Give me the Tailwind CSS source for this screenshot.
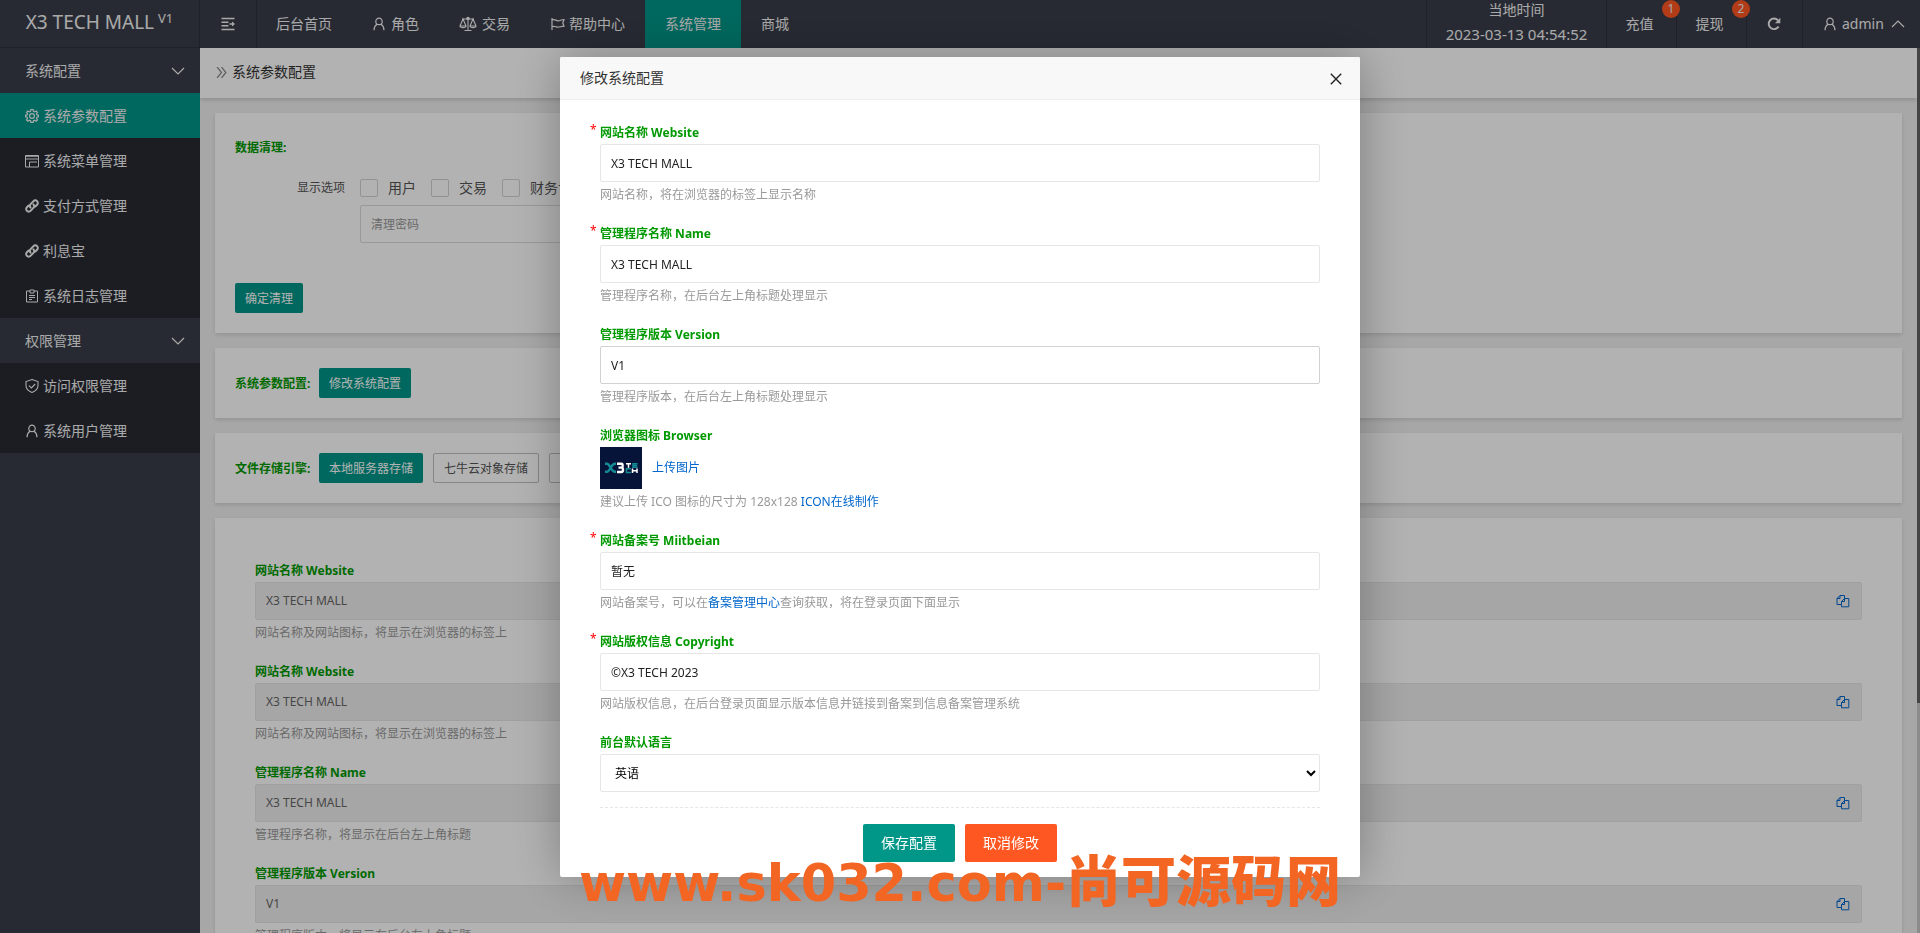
<!DOCTYPE html>
<html lang="zh-CN">
<head>
<meta charset="utf-8">
<title>X3 TECH MALL</title>
<script src="https://cdn.jsdelivr.net/npm/@tailwindcss/browser@4"></script>
</head>
<body class="h-screen overflow-hidden bg-[#f0f0f0] font-['Noto_Sans','Noto_Sans_CJK_SC',sans-serif] text-xs text-[#333]">
<svg class="hidden" aria-hidden="true">
  <symbol id="user" viewBox="0 0 14 14"><path d="M7 7.6A3.2 3.2 0 1 0 7 1.200a3.200 3.200 0 0 0 0 6.400zM5 7.200C3 8.400 2.100 10.500 2 13.200M9 7.200c2 1.200 2.900 3.300 3 6" fill="none" stroke="currentColor" stroke-width="1.200"/></symbol>
  <symbol id="link" viewBox="0 0 14 14"><g fill="none" stroke="currentColor" stroke-width="2" stroke-linecap="round"><path d="M5.600 8.600c-1.100-1.200-1-2.500 0-3.500l2.900-3c1-1 2.600-1 3.600 0s1 2.600 0 3.600L10.300 7.500"/><path d="M8.400 5.400c1.100 1.200 1 2.500 0 3.500l-2.900 3c-1 1-2.600 1-3.600 0s-1-2.600 0-3.600L3.700 6.500"/></g></symbol>
  <symbol id="down" viewBox="0 0 14 14"><path d="M1 4l6 6 6-6" fill="none" stroke="currentColor" stroke-width="1.200"/></symbol>
  <symbol id="copy" viewBox="0 0 14 14"><path d="M5.500 10.500h-4.500V4.500L4 1.500h4.500v3M1 4.500h3v-3M5.500 12.800V7.500L8.500 4.500h4.300v8.300zM5.500 7.500h3v-3" fill="none" stroke="currentColor" stroke-width="1"/></symbol>
</svg>
<div class="flex h-full flex-col">
  <header class="flex h-12 shrink-0 bg-[#393d49] text-sm text-[#f3f3f3]">
    <div class="flex w-50 shrink-0 justify-center gap-1 border-r border-b border-black/20 text-[19px] leading-11"><span>X3 TECH MALL</span><sup class="top-0 text-[13px] leading-9">V1</sup></div>
    <nav class="flex flex-1 items-stretch" aria-label="主导航">
      <button class="flex w-[57px] items-center justify-center border-r border-black/20" aria-label="收起菜单"><svg class="size-4" viewBox="0 0 16 16" fill="none" stroke="currentColor" stroke-width="1.500"><path d="M1.500 2.500h13M1.500 6.200h7M1.500 9.800h7M1.500 13.500h13M9.500 8H13"/><path d="M12 5.500L15 8l-3 2.500z" fill="currentColor" stroke="none"/></svg></button>
      <a href="#" class="flex items-center pr-5 pl-[19px]">后台首页</a>
      <a href="#" class="flex items-center gap-[5px] px-5"><svg class="size-3.5"><use href="#user"/></svg>角色</a>
      <a href="#" class="flex items-center gap-[5px] px-5"><svg class="h-4 w-[18px]" viewBox="0 0 18 16" fill="none" stroke="currentColor" stroke-width="1.100"><path d="M9 1v13M5.500 14.500h7M3 3h12M4 3L1 10h6zM14 3l-3 7h6zM1 10c.3 2.200 5.700 2.200 6 0M11 10c.3 2.200 5.700 2.200 6 0"/><circle cx="9" cy="2.500" r="1.200" fill="currentColor"/></svg>交易</a>
      <a href="#" class="flex items-center gap-1 px-5"><svg class="h-4 w-[15px]" viewBox="0 0 15 16" fill="none" stroke="currentColor" stroke-width="1.200"><path d="M2 2v12M2 4c2.500-1.500 4 .8 6 .8S11.500 3.500 14 3.500L12.800 7l1.200 3.200c-2.500 0-4 1-6 1s-3.500-1.800-6-.5"/></svg>帮助中心</a>
      <a href="#" class="flex items-center bg-[#009688] px-5" aria-current="page">系统管理</a>
      <a href="#" class="flex items-center px-5">商城</a>
    </nav>
    <div class="flex items-stretch">
      <div class="flex w-[180px] flex-col items-center border-l border-black/20"><span class="h-5 leading-5">当地时间</span><time class="text-[15px] leading-7">2023-03-13 04:54:52</time></div>
      <a href="#" class="relative flex w-[70px] items-center justify-center border-l border-black/20 pr-1">充值<span class="absolute top-0 -right-1 z-10 size-[18px] rounded-full bg-[#ff5722] text-center text-xs leading-[18px]">1</span></a>
      <a href="#" class="relative flex w-[70px] items-center justify-center border-l border-black/20 pr-1">提现<span class="absolute top-0 -right-1 z-10 size-[18px] rounded-full bg-[#ff5722] text-center text-xs leading-[18px]">2</span></a>
      <button class="flex w-14 items-center justify-center border-l border-black/20 pr-0.5" aria-label="刷新"><svg class="size-3.5" viewBox="0 0 14 14"><path d="M11.600 9.500A5.300 5.300 0 1 1 11 3.300" fill="none" stroke="currentColor" stroke-width="1.900"/><path d="M13.300.8v5.400H8z" fill="currentColor"/></svg></button>
      <button class="flex w-[118px] items-center gap-[5px] border-l border-black/20 pl-5"><svg class="size-3.5"><use href="#user"/></svg>admin<svg class="ml-0.5 size-3.5 rotate-180"><use href="#down"/></svg></button>
    </div>
  </header>
  <div class="flex min-h-0 flex-1">
    <aside class="w-50 shrink-0 bg-[#393d49] text-sm text-[#f3f3f3]">
      <button class="flex h-[45px] w-full items-center justify-between pr-[15px] pl-[25px]">系统配置<svg class="size-3.5"><use href="#down"/></svg></button>
      <nav class="bg-black/30" aria-label="系统配置">
        <a href="#" class="flex h-[45px] items-center gap-1 bg-[#009688] pl-[25px]" aria-current="page"><svg class="size-3.5" viewBox="0 0 14 14" fill="none" stroke="currentColor" stroke-width="1.200"><circle cx="7" cy="7" r="2.400"/><path d="M5.900.7h2.200l.4 1.700 1.100.5 1.500-.9 1.300 1.300-.9 1.600.5 1 1.500.4v1.500l-1.500.5-.5 1.100.9 1.500-1.300 1.300-1.500-.9-1.100.5-.4 1.600H5.900l-.4-1.600-1.100-.5-1.500.9-1.300-1.300.9-1.500L2 8.300.5 7.800V6.300L2 5.900l.5-1-.9-1.600L2.900 2l1.500.9 1.100-.5z"/></svg>系统参数配置</a>
        <a href="#" class="flex h-[45px] items-center gap-1 pl-[25px]"><svg class="size-3.5" viewBox="0 0 14 14" fill="none" stroke="currentColor"><path d="M.5 1.500h13v11.500H.5zM.5 5h13M4.500 8v5M4.500 8H12"/><path d="M.5 2h13" stroke-width="1.500"/></svg>系统菜单管理</a>
        <a href="#" class="flex h-[45px] items-center gap-1 pl-[25px]"><svg class="size-3.5"><use href="#link"/></svg>支付方式管理</a>
        <a href="#" class="flex h-[45px] items-center gap-1 pl-[25px]"><svg class="size-3.5"><use href="#link"/></svg>利息宝</a>
        <a href="#" class="flex h-[45px] items-center gap-1 pl-[25px]"><svg class="size-3.5" viewBox="0 0 14 14" fill="none" stroke="currentColor"><path d="M5 2H1.500v11h11V2H9M5 1h4v3H5zM4 6.500h6M4 8.500h6M4 10.500h3"/></svg>系统日志管理</a>
      </nav>
      <button class="flex h-[45px] w-full items-center justify-between pr-[15px] pl-[25px]">权限管理<svg class="size-3.5"><use href="#down"/></svg></button>
      <nav class="bg-black/30" aria-label="权限管理">
        <a href="#" class="flex h-[45px] items-center gap-1 pl-[25px]"><svg class="size-3.5" viewBox="0 0 14 14" fill="none" stroke="currentColor" stroke-width="1.100"><path d="M7 .6l6 2v4c0 3.400-2.600 5.600-6 6.900C3.600 12.200 1 10 1 6.600v-4zM4 6.600L6.400 9 10.200 5"/></svg>访问权限管理</a>
        <a href="#" class="flex h-[45px] items-center gap-1 pl-[25px]"><svg class="size-3.5"><use href="#user"/></svg>系统用户管理</a>
      </nav>
    </aside>
    <main class="relative min-w-0 flex-1 overflow-hidden pr-[3px]">
      <div class="flex h-[50px] items-center gap-[5px] bg-white pb-0.5 pl-4 text-sm shadow-[0_2px_4px_rgba(0,0,0,0.15)]"><svg class="size-[11px] text-[#888]" viewBox="0 0 10 10"><path d="M1 0l4 5-4 5M5 0l4 5-4 5" fill="none" stroke="currentColor" stroke-width="1.100"/></svg><h1>系统参数配置</h1></div>
      <div class="flex flex-col gap-[15px] p-[15px]">
        <section class="bg-white p-5 shadow-[0_2px_4px_rgba(0,0,0,0.12)]">
          <h2 class="leading-[30px] font-bold text-[#090]">数据清理:</h2>
          <div class="flex gap-[15px] pt-[11px] pl-[62px] text-[#555]">
            <span class="leading-7">显示选项</span>
            <div>
              <div class="flex h-7 items-center gap-[15px] text-sm">
                <label class="flex items-center gap-2.5"><input type="checkbox" class="size-[18px] appearance-none rounded-xs border border-[#d2d2d2]">用户</label>
                <label class="flex items-center gap-2.5"><input type="checkbox" class="size-[18px] appearance-none rounded-xs border border-[#d2d2d2]">交易</label>
                <label class="flex items-center gap-2.5"><input type="checkbox" class="size-[18px] appearance-none rounded-xs border border-[#d2d2d2]">财务记录</label>
              </div>
              <input type="password" aria-label="清理密码" placeholder="清理密码" class="mt-[3px] block h-[38px] w-75 rounded-xs border border-[#dcdcdc] px-2.5 placeholder:text-[#999]">
            </div>
          </div>
          <button class="mt-10 block h-[30px] rounded-xs bg-[#009688] px-2.5 pt-0.5 text-white">确定清理</button>
        </section>
        <section class="flex items-center bg-white p-5 shadow-[0_2px_4px_rgba(0,0,0,0.12)]">
          <h2 class="w-21 pt-0.5 font-bold whitespace-nowrap text-[#090]">系统参数配置:</h2>
          <button class="h-[30px] rounded-xs bg-[#009688] px-2.5 pt-0.5 text-white">修改系统配置</button>
        </section>
        <section class="flex items-center bg-white p-5 shadow-[0_2px_4px_rgba(0,0,0,0.12)]">
          <h2 class="w-21 pt-0.5 font-bold whitespace-nowrap text-[#090]">文件存储引擎:</h2>
          <div class="flex gap-2.5">
            <button class="h-[30px] rounded-xs bg-[#009688] px-2.5 pt-0.5 text-white">本地服务器存储</button>
            <button class="h-[30px] rounded-xs border border-[#c0c0c0] px-2.5 pt-0.5 text-[#555]">七牛云对象存储</button>
            <button class="h-[30px] rounded-xs border border-[#c0c0c0] px-2.5 pt-0.5 text-[#555]">阿里云OSS存储</button>
          </div>
        </section>
        <section class="flex flex-col gap-[15px] bg-white p-10 shadow-[0_2px_4px_rgba(0,0,0,0.12)]">
          <div><div class="h-6 leading-[26px] font-bold text-[#090]">网站名称 Website</div><div class="flex h-[38px] items-center justify-between rounded-xs border border-[#e6e6e6] bg-[#eee] pr-[11px] pl-2.5 text-[#666]">X3 TECH MALL<button class="text-[#06c]" aria-label="复制"><svg class="size-3.5"><use href="#copy"/></svg></button></div><p class="h-6 leading-[26px] text-[#999]">网站名称及网站图标，将显示在浏览器的标签上</p></div>
          <div><div class="h-6 leading-[26px] font-bold text-[#090]">网站名称 Website</div><div class="flex h-[38px] items-center justify-between rounded-xs border border-[#e6e6e6] bg-[#eee] pr-[11px] pl-2.5 text-[#666]">X3 TECH MALL<button class="text-[#06c]" aria-label="复制"><svg class="size-3.5"><use href="#copy"/></svg></button></div><p class="h-6 leading-[26px] text-[#999]">网站名称及网站图标，将显示在浏览器的标签上</p></div>
          <div><div class="h-6 leading-[26px] font-bold text-[#090]">管理程序名称 Name</div><div class="flex h-[38px] items-center justify-between rounded-xs border border-[#e6e6e6] bg-[#eee] pr-[11px] pl-2.5 text-[#666]">X3 TECH MALL<button class="text-[#06c]" aria-label="复制"><svg class="size-3.5"><use href="#copy"/></svg></button></div><p class="h-6 leading-[26px] text-[#999]">管理程序名称，将显示在后台左上角标题</p></div>
          <div><div class="h-6 leading-[26px] font-bold text-[#090]">管理程序版本 Version</div><div class="flex h-[38px] items-center justify-between rounded-xs border border-[#e6e6e6] bg-[#eee] pr-[11px] pl-2.5 text-[#666]">V1<button class="text-[#06c]" aria-label="复制"><svg class="size-3.5"><use href="#copy"/></svg></button></div><p class="h-6 leading-[26px] text-[#999]">管理程序版本，将显示在后台左上角标题</p></div>
        </section>
      </div>
      <div class="absolute inset-y-0 right-0 w-[3px] bg-[#c8c8c8]"><div class="h-[74%] bg-[#626262]"></div></div>
    </main>
  </div>
</div>

<div class="fixed inset-0 z-20 flex items-start justify-center bg-black/30 pt-[57px]">
  <div role="dialog" aria-labelledby="dlg-title" class="w-200 rounded-xs bg-white shadow-[1px_1px_50px_rgba(0,0,0,0.3)]">
    <div class="flex h-[43px] items-center justify-between rounded-t-xs border-b border-[#eee] bg-[#f8f8f8] pr-4.5 pl-5 text-sm">
      <h2 id="dlg-title">修改系统配置</h2>
      <button class="pt-0.5" aria-label="关闭"><svg class="size-3" viewBox="0 0 12 12"><path d="M.8.8l10.400 10.400M11.200.8L.8 11.200" stroke="#222" stroke-width="1.400"/></svg></button>
    </div>
    <form class="px-10 pt-5 pb-[15px] text-[#999]">
      <div class="flex flex-col gap-[15px]">
        <div class="relative"><span class="absolute top-0.5 -left-2.5 text-[#f00]">*</span><label for="f1" class="block h-6 leading-[26px] font-bold text-[#090]">网站名称 Website</label><input id="f1" value="X3 TECH MALL" class="block h-[38px] w-full rounded-xs border border-[#e6e6e6] px-2.5 text-[#222]"><p class="h-6 leading-[26px]">网站名称，将在浏览器的标签上显示名称</p></div>
        <div class="relative"><span class="absolute top-0.5 -left-2.5 text-[#f00]">*</span><label for="f2" class="block h-6 leading-[26px] font-bold text-[#090]">管理程序名称 Name</label><input id="f2" value="X3 TECH MALL" class="block h-[38px] w-full rounded-xs border border-[#e6e6e6] px-2.5 text-[#222]"><p class="h-6 leading-[26px]">管理程序名称，在后台左上角标题处理显示</p></div>
        <div><label for="f3" class="block h-6 leading-[26px] font-bold text-[#090]">管理程序版本 Version</label><input id="f3" value="V1" class="block h-[38px] w-full rounded-xs border border-[#d2d2d2] px-2.5 text-[#222]"><p class="h-6 leading-[26px]">管理程序版本，在后台左上角标题处理显示</p></div>
        <div>
          <div class="h-6 leading-[26px] font-bold text-[#090]">浏览器图标 Browser</div>
          <div class="flex items-center gap-2.5">
            <svg class="size-[42px]" viewBox="0 0 42 42" role="img" aria-label="X3 TECH"><path d="M0 0h42v42H0z" fill="#06143a"/><g fill="none" stroke-width="2.400"><path d="M5 16.800h2c3 0 4 8 8 8h1M5 24.800h2c3 0 4-8 8-8h1" stroke="#138a94"/><path d="M17 16.800h4.500c1.500 0 1.500 3.800 0 3.800H18.500h3c2 0 2 4.400 0 4.400H17" stroke="#fff"/></g><g fill="none" stroke-width="1.500"><path d="M26 16.700h5M28.500 16.700v4M32.500 21.500v4.500M37 21.500v4.500M32.500 23.700h4.500" stroke="#fff"/><path d="M37.500 16.700h-4.500v3.500h4.500M33 18.500h4.300M31 21.700h-4.500v3.800h4.500" stroke="#138a94"/></g></svg>
            <a href="#" class="text-[#06c]">上传图片</a>
          </div>
          <p class="h-6 leading-[26px]">建议上传 ICO 图标的尺寸为 128x128 <a href="#" class="text-[#06c]">ICON在线制作</a></p>
        </div>
        <div class="relative"><span class="absolute top-0.5 -left-2.5 text-[#f00]">*</span><label for="f5" class="block h-6 leading-[26px] font-bold text-[#090]">网站备案号 Miitbeian</label><input id="f5" value="暂无" class="block h-[38px] w-full rounded-xs border border-[#e6e6e6] px-2.5 text-[#222]"><p class="h-6 leading-[26px]">网站备案号，可以在<a href="#" class="text-[#06c]">备案管理中心</a>查询获取，将在登录页面下面显示</p></div>
        <div class="relative"><span class="absolute top-0.5 -left-2.5 text-[#f00]">*</span><label for="f6" class="block h-6 leading-[26px] font-bold text-[#090]">网站版权信息 Copyright</label><input id="f6" value="©X3 TECH 2023" class="block h-[38px] w-full rounded-xs border border-[#e6e6e6] px-2.5 text-[#222]"><p class="h-6 leading-[26px]">网站版权信息，在后台登录页面显示版本信息并链接到备案到信息备案管理系统</p></div>
        <div><label for="f7" class="block h-6 leading-[26px] font-bold text-[#090]">前台默认语言</label><select id="f7" class="block h-[38px] w-full rounded-xs border border-[#e6e6e6] bg-white pl-2.5 text-black"><option>英语</option></select></div>
      </div>
      <div class="mt-[15px] flex justify-center gap-2.5 border-t border-dashed border-[#e6e6e6] pt-4 text-sm text-white">
        <button type="button" class="h-[38px] rounded-xs bg-[#009688] px-[18px]">保存配置</button>
        <button type="button" class="h-[38px] rounded-xs bg-[#ff5722] px-[18px]">取消修改</button>
      </div>
    </form>
  </div>
</div>
<div class="pointer-events-none fixed top-[841px] left-1/2 z-30 flex -translate-x-1/2 items-baseline whitespace-nowrap text-[#f26522]"><span class="font-['DejaVu_Sans'] text-[51px] leading-[72px] font-bold">www.sk032.com-</span><span class="font-['Noto_Sans_CJK_SC'] text-[55px] leading-[72px] font-black">尚可源码网</span></div>
</body>
</html>
